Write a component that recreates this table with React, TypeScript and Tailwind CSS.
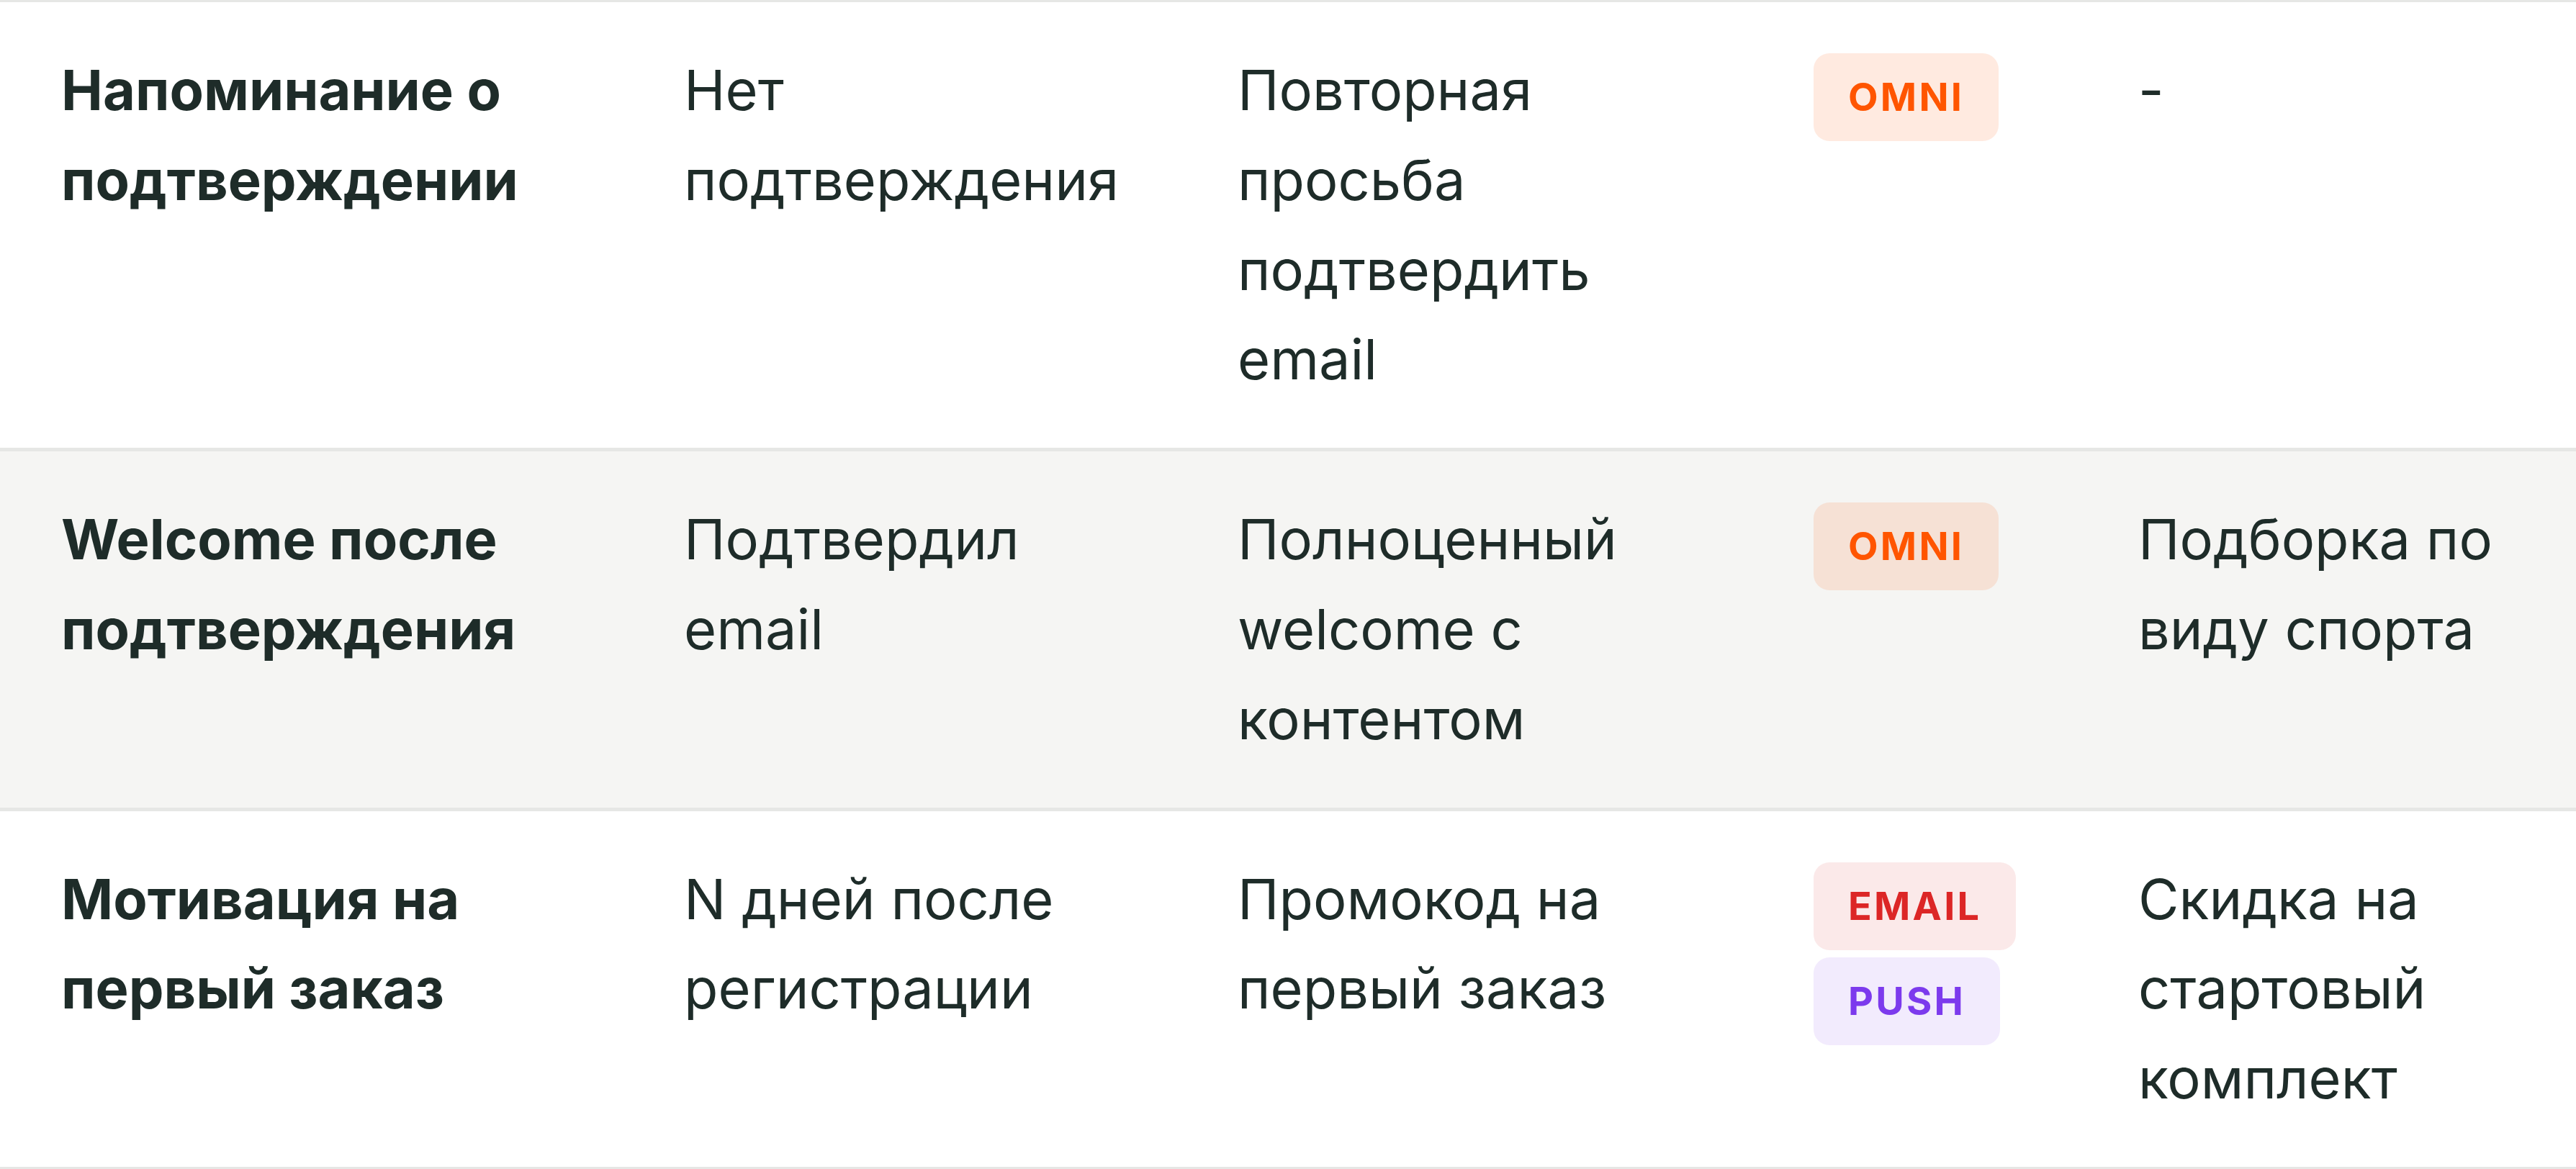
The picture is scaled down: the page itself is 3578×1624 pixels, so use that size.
import React from "react";

type Channel = "OMNI" | "EMAIL" | "PUSH";

interface IRow {
    name: string;
    trigger: string;
    content: string;
    channels: Channel[];
    offer: string;
}

const rows: IRow[] = [
    {
        name: "Напоминание о подтверждении",
        trigger: "Нет подтверждения",
        content: "Повторная просьба подтвердить email",
        channels: ["OMNI"],
        offer: "-",
    },
    {
        name: "Welcome после подтверждения",
        trigger: "Подтвердил email",
        content: "Полноценный welcome с контентом",
        channels: ["OMNI"],
        offer: "Подборка по виду спорта",
    },
    {
        name: "Мотивация на первый заказ",
        trigger: "N дней после регистрации",
        content: "Промокод на первый заказ",
        channels: ["EMAIL", "PUSH"],
        offer: "Скидка на стартовый комплект",
    },
];

const badgeStyles: Record<Channel, string> = {
    OMNI: "bg-[#ff5500]/[0.12] text-[#ff5500]",
    EMAIL: "bg-[#dc2626]/10 text-[#dc2626]",
    PUSH: "bg-[#7c3aed]/10 text-[#7c3aed]",
};

function Badge({ channel }: { channel: Channel }) {
    return (
        <span
            className={`inline-block rounded-[22px] px-[48px] py-[18px] text-[54px] leading-[86px] font-bold tracking-[0.06em] ${badgeStyles[channel]}`}
        >
            {channel}
        </span>
    );
}

export default function App() {
    return (
        <div className="w-full bg-white font-['Inter',sans-serif] text-[77.5px] leading-[124.8px] text-[#1e2c29] border-t-[3px] border-[#e6e7e5]">
            {rows.map((row, i) => (
                <div
                    key={row.name}
                    className={`grid grid-cols-[865px_769px_800px_451px_1fr] pl-[85px] py-[60px] border-b-[5px] border-[#e6e7e5] ${
                        i % 2 === 1 ? "bg-[#f5f5f3]" : "bg-white"
                    }`}
                >
                    <div className="max-w-[740px] font-bold">{row.name}</div>
                    <div className="max-w-[620px]">{row.trigger}</div>
                    <div className="max-w-[600px]">{row.content}</div>
                    <div className="flex flex-col items-start gap-[10px] pt-[11px]">
                        {row.channels.map((c) => (
                            <Badge key={c} channel={c} />
                        ))}
                    </div>
                    <div className="max-w-[560px]">{row.offer}</div>
                </div>
            ))}
        </div>
    );
}
